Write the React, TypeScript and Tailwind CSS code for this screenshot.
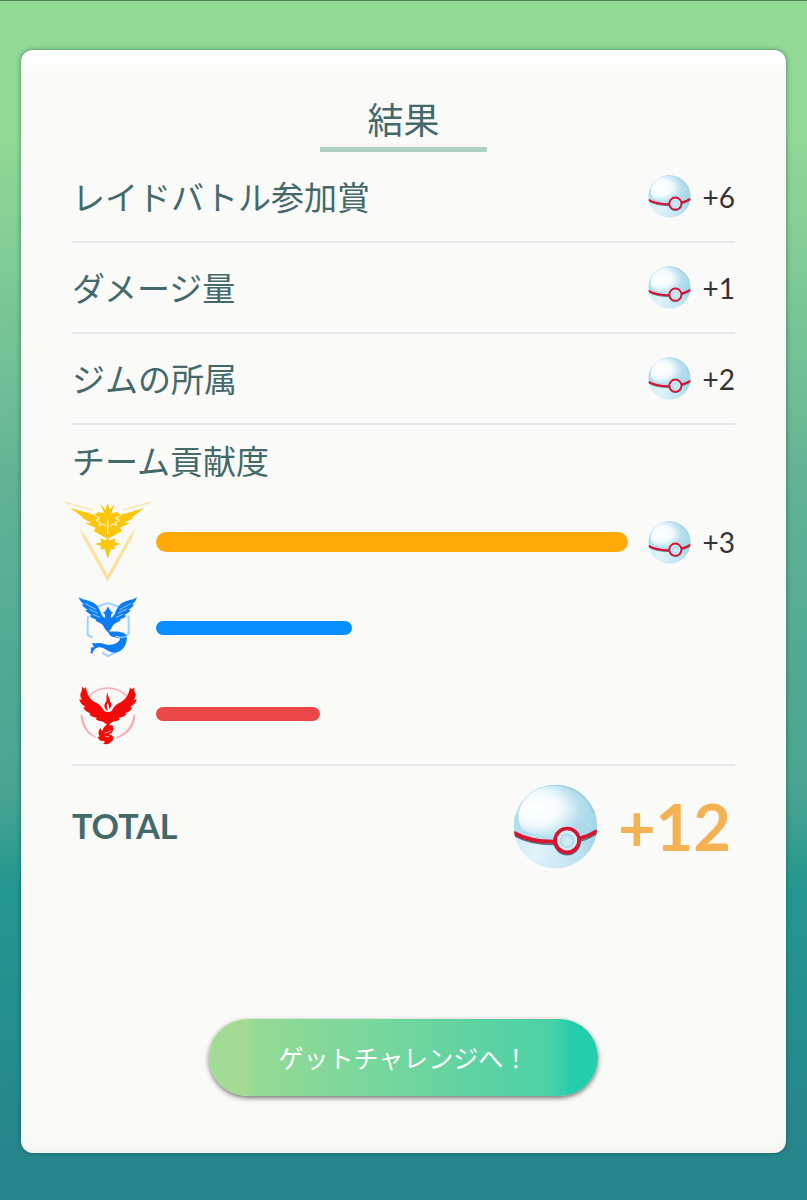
import type { ReactNode } from "react";

type BarProps = {
  label: string;
  emblem: ReactNode;
  percent: number;
  barClass: string;
  reward?: number;
};

const PremierBall = ({ id, className }: { id: string; className: string }) => (
  <svg viewBox="0 0 252 256" className={className} aria-hidden="true">
    <defs>
      <radialGradient id={`${id}-base`} cx="0.25" cy="0.8" r="0.85">
        <stop offset="0" stopColor="#e2f4fa" />
        <stop offset="0.6" stopColor="#bfe3f1" />
        <stop offset="1" stopColor="#98cfe5" />
      </radialGradient>
      <radialGradient id={`${id}-shine`} cx="0.25" cy="0.45" r="0.78">
        <stop offset="0" stopColor="#ffffff" />
        <stop offset="0.4" stopColor="#f4fbfd" />
        <stop offset="0.75" stopColor="#b5deed" />
        <stop offset="1" stopColor="#a9d9eb" />
      </radialGradient>
      <clipPath id={`${id}-clip`}>
        <circle cx="126" cy="128" r="126" />
      </clipPath>
    </defs>
    <g clipPath={`url(#${id}-clip)`}>
      <rect width="252" height="256" fill={`url(#${id}-base)`} />
      <path d="M0 90H252V136Q190 168 126 172Q50 170 0 145Z" fill="#a9d9ea" opacity="0.7" />
      <path
        d="M15 95C18 45 62 6 120 5C180 4 228 48 238 92C240 116 228 134 202 146C150 168 62 160 30 138C18 128 14 112 15 95Z"
        fill={`url(#${id}-shine)`}
      />
      <path d="M2 155Q50 183 126 182Q206 180 252 148" fill="none" stroke="#4f7188" strokeWidth="5" />
      <path d="M0 147Q48 175 126 174Q204 172 252 141" fill="none" stroke="#d81430" strokeWidth="12" />
    </g>
    <circle cx="161" cy="174" r="38" fill="none" stroke="#53728a" strokeWidth="6" />
    <circle cx="161" cy="170" r="36" fill="#d4eef6" stroke="#d81430" strokeWidth="11" />
    <circle cx="161" cy="171" r="20" fill="#c3e6f3" stroke="#9acbdf" strokeWidth="3" />
    <circle cx="163" cy="173" r="13" fill="#cdebf5" />
  </svg>
);

const InstinctEmblem = () => (
  <svg viewBox="27 27 264 258" className="h-[86px] w-[88px]" aria-hidden="true">
    <path
      d="M27 34L115 58L112 62L40 41L44 50ZM290 34L203 58L206 62L278 41L274 50ZM72 112L92 138L84 140ZM244 112L224 138L232 140Z"
      fill="#fce6ae"
    />
    <path d="M82 138H92L158 254L224 138H234L158 276Z" fill="#fbe0a0" />
    <g fill="#fdc60b">
      <path d="M46 54L118 74L130 66L148 70L136 41L151 59L158 38L164 59L179 41L169 70L186 66L198 74L268 54L231 82L236 85L207 98L226 99L194 113L201 123L158 147L116 123L122 113L90 100L110 99L80 84L86 83Z" />
      <path d="M136 145L151 151L158 146L165 151L182 145L178 157L199 162L177 168L181 178L168 176L158 206L149 176L136 179L139 168L119 162L139 157Z" />
    </g>
    <g fill="none" stroke="#fffbe8" strokeWidth="3">
      <path d="M118 76L135 85L123 91L137 98L131 106L146 102L152 110" />
      <path d="M198 76L182 85L194 91L180 98L186 106L171 102L164 110" />
      <path d="M158 90V132" strokeWidth="4" />
    </g>
  </svg>
);

const MysticEmblem = () => (
  <svg viewBox="-18 -15 264 258" className="h-[86px] w-[88px]" aria-hidden="true">
    <path
      d="M79 51L114 39L149 51M56 78L53 84V134L67 143M96 187L114 198L137 187M161 142L176 131V82L172 77"
      fill="none"
      stroke="#9fd2fb"
      strokeWidth="6"
    />
    <g fill="#0a7cf5">
      <path d="M26 22C40 32 66 30 80 46C92 59 91 75 104 84C108 78 104 71 98 66C104 67 107 64 107 59C110 61 110 57 114 49C118 57 118 61 121 59C121 64 124 67 130 66C124 71 120 78 124 84C137 75 136 59 148 46C162 30 188 32 201 22C198 33 192 39 185 44L193 43C188 52 181 57 174 60L182 60C176 69 169 73 162 75L169 77C163 84 156 87 148 88L153 91C143 98 134 100 129 106C125 114 122 121 114 126C106 121 103 114 99 106C94 100 85 98 75 91L80 88C72 87 65 84 59 77L66 75C59 73 52 69 46 60L54 60C47 57 40 52 35 43L43 44C36 39 30 33 26 22Z" />
      <path d="M113 122C124 127 139 122 152 127C166 128 172 136 170 151C168 170 153 188 135 188C119 188 109 177 96 173C84 169 72 174 67 191L60 188C64 184 64 179 62 173L73 171L65 160C82 159 93 157 105 163C119 168 140 163 149 151L150 145C144 143 139 144 133 142C121 139 115 132 113 122Z" />
    </g>
    <g fill="none" stroke="#d9edff" strokeWidth="2">
      <path d="M46 41L79 59M57 57L84 70M69 73L90 82M182 41L149 59M171 57L144 70M159 73L138 82" />
      <path d="M137 139Q151 145 168 140" strokeWidth="3" />
    </g>
  </svg>
);

const ValorEmblem = () => (
  <svg viewBox="-18 -12 264 258" className="h-[86px] w-[88px]" aria-hidden="true">
    <g fill="none" stroke="#f9a9b2" strokeWidth="4">
      <path d="M56 64Q80 39 113 39Q147 39 171 64" />
    </g>
    <path
      d="M32 118C33 152 47 176 77 189L76 184C54 172 42 151 38 122ZM196 118C195 152 180 178 138 191L137 187C168 174 185 154 190 122Z"
      fill="#f9a9b2"
    />
    <g fill="#f50a0a">
      <path d="M37 34C41 42 45 43 48 35C50 59 61 75 79 83C91 88 96 97 102 108C108 112 119 112 125 108C131 97 136 88 149 83C167 75 177 59 180 37C184 46 188 43 194 36C192 44 192 49 197 57C198 66 193 70 191 75L200 72C198 85 188 91 181 95L187 98C181 108 173 112 166 115L169 119C161 125 153 128 147 128L149 134C138 140 130 136 124 144L114 149L104 144C98 136 90 140 78 134L80 128C74 128 66 125 58 119L61 115C54 112 46 108 40 98L46 95C39 91 30 85 28 72L36 75C34 70 30 66 31 57C36 49 36 44 37 34Z" />
      <path d="M113 51C111 63 120 69 120 80C129 88 122 98 117 103C119 94 116 89 112 83C108 90 112 98 113 108C103 102 100 91 107 82C113 75 106 66 113 51Z" />
      <path d="M113 143C119 148 119 151 126 151C133 156 131 166 125 174L116 178C123 179 129 182 130 188C130 199 119 205 112 208L99 207C106 203 105 199 100 197C91 200 84 193 83 184C88 188 90 185 87 180C83 171 88 162 93 159C92 167 96 168 99 164C99 156 108 153 113 143Z" />
    </g>
    <path d="M124 166Q116 173 104 174M105 183Q112 188 118 184" fill="none" stroke="#fff4f4" strokeWidth="2" />
  </svg>
);

const Reward = ({ id, amount }: { id: string; amount: number }) => (
  <div className="flex shrink-0 items-center gap-3">
    <PremierBall id={id} className="size-[43px]" />
    <span className="font-['Lato',sans-serif] text-[28px] leading-none text-[#333333]">+{amount}</span>
  </div>
);

const TeamBar = ({ label, emblem, percent, barClass, reward }: BarProps) => (
  <li className="flex h-[86px] items-center" aria-label={label}>
    <div className="-ml-2 mr-1 shrink-0">{emblem}</div>
    <div className="flex-1">
      <div className={`rounded-full ${barClass}`} style={{ width: `${percent}%` }} />
    </div>
    <div className="ml-5 flex w-[87px] justify-end">
      {reward && <Reward id="team" amount={reward} />}
    </div>
  </li>
);

const results = [
  { id: "raid", label: "レイドバトル参加賞", amount: 6 },
  { id: "damage", label: "ダメージ量", amount: 1 },
  { id: "gym", label: "ジムの所属", amount: 2 },
];

const App = () => {
  return (
    <main className="min-h-screen border-t border-[#4d8253] bg-[linear-gradient(180deg,#92d996_0%,#92d996_11%,#5fb195_42%,#48a491_66%,#23978f_74%,#27868c_96%)] px-[21px] pt-[49px] pb-[47px] font-['Noto_Sans_CJK_JP',sans-serif] text-[#44696b]">
      <div className="rounded-xl bg-[#fafaf8] bg-linear-to-b from-white to-transparent to-[24px] px-[51px] pb-[57px] shadow-[0_0_5px_rgba(0,60,50,0.5),inset_0_-10px_14px_-8px_#f0f1ea]">
        <h1 className="mx-auto w-[167px] border-b-[5px] border-[#afd2c0] pt-10 text-center text-[36px] leading-[57px]">
          結果
        </h1>
        <ul>
          {results.map((item) => (
            <li
              key={item.id}
              className="flex h-[91px] items-center justify-between border-b-2 border-[#e7e8e7]"
            >
              <span className="text-[33px] leading-none">{item.label}</span>
              <Reward id={item.id} amount={item.amount} />
            </li>
          ))}
        </ul>
        <section className="border-b-2 border-[#e7e8e7] pb-[7px]">
          <h2 className="mb-1 text-[33px] leading-[70px]">チーム貢献度</h2>
          <ul>
            <TeamBar
              label="Instinct"
              emblem={<InstinctEmblem />}
              percent={100}
              barClass="h-5 bg-[#ffa909]"
              reward={3}
            />
            <TeamBar label="Mystic" emblem={<MysticEmblem />} percent={41.5} barClass="h-3.5 bg-[#088eff]" />
            <TeamBar label="Valor" emblem={<ValorEmblem />} percent={34.8} barClass="h-3.5 bg-[#ea4748]" />
          </ul>
        </section>
        <div className="flex h-[120px] items-center justify-between font-['Lato',sans-serif] font-bold">
          <span className="text-[34px] leading-none">TOTAL</span>
          <div className="flex items-center gap-5 pr-1">
            <PremierBall id="total" className="size-[85px]" />
            <span className="text-[65px] leading-none text-[#f5b252]">+12</span>
          </div>
        </div>
        <button className="mx-auto mt-[133px] flex h-[77px] w-full max-w-[389px] cursor-pointer items-center justify-center rounded-full bg-[linear-gradient(90deg,#a0dc95_0%,#a4da92_10%,#94da95_12%,#4bd1a6_88%,#24cdab_93%)] text-[25px] text-white shadow-[0_2px_5px_rgba(0,0,0,0.55)]">
          ゲットチャレンジへ！
        </button>
      </div>
    </main>
  );
};

export default App;
